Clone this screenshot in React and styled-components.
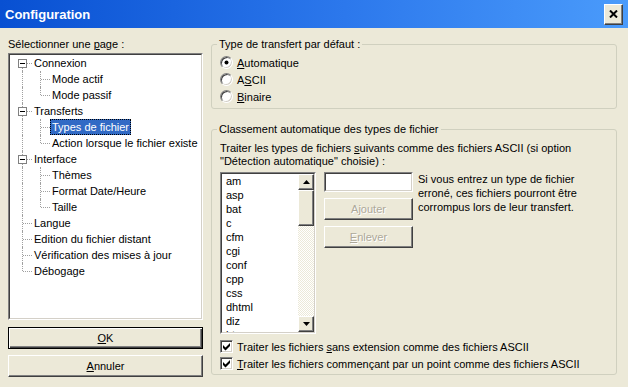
import React from 'react';
import styled, { createGlobalStyle, css } from 'styled-components';

const GlobalStyle = createGlobalStyle`
  html, body {
    margin: 0;
    padding: 0;
  }
  body {
    background: #ece9d8;
    font-family: "Liberation Sans", Arial, sans-serif;
    font-size: 11px;
    color: #000;
  }
  * {
    box-sizing: border-box;
  }
`;

const raised = css`
  background: #ece9d8;
  border: 1px solid;
  border-color: #fff #404040 #404040 #fff;
  box-shadow: inset -1px -1px #808080;
`;

const Window = styled.div`
  width: 628px;
  height: 387px;
  display: flex;
  flex-direction: column;
  overflow: hidden;
  background: #ece9d8;
`;

const TitleBar = styled.div`
  height: 28px;
  flex: none;
  display: flex;
  align-items: center;
  justify-content: space-between;
  padding: 0 5px 0 5px;
  background: linear-gradient(to right, #0850d2 0%, #2c78ec 55%, #4a9bfb 100%);
  color: #fff;
  font-size: 13px;
  font-weight: bold;
`;

const CloseButton = styled.div`
  ${raised};
  width: 19px;
  height: 21px;
  display: flex;
  align-items: center;
  justify-content: center;
`;

const Body = styled.div`
  flex: 1;
  display: flex;
  gap: 8px;
  padding: 10px 11px 0 8px;
`;

const LeftPane = styled.div`
  width: 195px;
  flex: none;
  display: flex;
  flex-direction: column;
`;

const RightPane = styled.div`
  flex: 1;
  display: flex;
  flex-direction: column;
`;

const Caption = styled.div`
  line-height: 13px;
  white-space: nowrap;
`;

const Sunken = styled.div`
  border: 1px solid;
  border-color: #808080 #fff #fff #808080;
  display: flex;
  flex: none;
`;

const SunkenInner = styled.div`
  flex: 1;
  min-width: 0;
  border: 1px solid;
  border-color: #404040 #d4d0c8 #d4d0c8 #404040;
  background: #fff;
  display: flex;
  overflow: hidden;
`;

const TreeFrame = styled(Sunken)`
  margin-top: 2px;
  height: 267px;
`;

const TreeList = styled.div`
  display: flex;
  flex-direction: column;
`;

const TreeRow = styled.div`
  display: flex;
  align-items: center;
  height: 16px;
  padding-left: 3px;
`;

const Guide = styled.span`
  position: relative;
  flex: none;
  width: 18px;
  height: 16px;

  &::before {
    content: '';
    display: ${p => (p.$kind === 'none' ? 'none' : 'block')};
    position: absolute;
    left: 9px;
    top: ${p => (p.$kind === 'first' ? '8px' : '0')};
    bottom: ${p => (p.$kind === 'ell' ? '8px' : '0')};
    border-left: 1px dotted #a0a0a0;
  }

  &::after {
    content: '';
    display: ${p => (p.$kind === 'pipe' || p.$kind === 'none' ? 'none' : 'block')};
    position: absolute;
    left: 10px;
    right: -1px;
    top: 8px;
    border-top: 1px dotted #a0a0a0;
  }
`;

const Expander = styled.span`
  position: absolute;
  left: 5px;
  top: 4px;
  width: 9px;
  height: 9px;
  border: 1px solid #808080;
  background: #fff;
  z-index: 1;

  &::after {
    content: '';
    position: absolute;
    left: 1px;
    top: 3px;
    width: 5px;
    height: 1px;
    background: #000;
  }
`;

const TreeLabel = styled.span`
  margin-left: 1px;
  padding: 0 2px;
  line-height: 16px;
  white-space: nowrap;
  ${p =>
    p.$selected &&
    css`
      background: #316ac5;
      color: #fff;
      outline: 1px dotted #000;
      outline-offset: -1px;
    `}
`;

const PushButton = styled.div`
  ${raised};
  height: 22px;
  display: flex;
  align-items: center;
  justify-content: center;
  color: ${p => (p.$disabled ? '#aca899' : '#000')};
  text-shadow: ${p => (p.$disabled ? '1px 1px #fff' : 'none')};
  ${p =>
    p.$default &&
    css`
      border-color: #000;
      box-shadow: inset 1px 1px #fff, inset -1px -1px #404040, inset -2px -2px #808080;
    `}
`;

const DialogButtons = styled.div`
  display: flex;
  flex-direction: column;
  gap: 6px;
  margin-top: 7px;
`;

const GroupBox = styled.fieldset`
  margin: ${p => p.$mt || 0}px 0 0;
  padding: 0 8px ${p => p.$pb || 0}px;
  border: 1px solid #d0d0bf;
  border-radius: 3px;
  min-width: 0;
  display: flex;
  flex-direction: column;
`;

const Legend = styled.legend`
  margin-left: -3px;
  padding: 0 2px;
  line-height: 13px;
`;

const RadioList = styled.div`
  margin-top: 3px;
  display: flex;
  flex-direction: column;
`;

const OptionRow = styled.label`
  display: flex;
  align-items: center;
  gap: 4px;
  height: 17px;
  white-space: nowrap;
`;

const RadioDot = styled.span`
  position: relative;
  width: 13px;
  height: 13px;
  flex: none;
  border-radius: 50%;
  border: 1px solid;
  border-color: #808080 #fff #fff #808080;
  background: #fff;
  box-shadow: inset 1px 1px #404040, inset -1px -1px #d4d0c8;

  &::after {
    content: '';
    display: ${p => (p.$checked ? 'block' : 'none')};
    position: absolute;
    left: 4px;
    top: 4px;
    width: 3px;
    height: 3px;
    border-radius: 50%;
    background: #000;
    box-shadow: 0 0 0 0.5px #000;
  }
`;

const CheckFrame = styled.span`
  width: 13px;
  height: 13px;
  flex: none;
  border: 1px solid;
  border-color: #808080 #fff #fff #808080;
  background: #fff;
  box-shadow: inset 1px 1px #404040, inset -1px -1px #d4d0c8;
  display: flex;
  align-items: center;
  justify-content: center;
`;

const Paragraph = styled.p`
  margin: 6px 0 0;
  line-height: 13px;
`;

const FileRow = styled.div`
  display: flex;
  align-items: flex-start;
  margin-top: 4px;
`;

const ListFrame = styled(Sunken)`
  width: 96px;
  height: 162px;
`;

const Items = styled.div`
  flex: 1;
  display: flex;
  flex-direction: column;
  overflow: hidden;
`;

const Item = styled.div`
  height: 14px;
  line-height: 14px;
  padding-left: 4px;
  flex: none;
`;

const ScrollBar = styled.div`
  width: 16px;
  flex: none;
  display: flex;
  flex-direction: column;
`;

const ScrollButton = styled.div`
  ${raised};
  height: 16px;
  flex: none;
  display: flex;
  align-items: center;
  justify-content: center;
`;

const Thumb = styled.div`
  ${raised};
  height: 36px;
  flex: none;
`;

const Track = styled.div`
  flex: 1;
  background: repeating-conic-gradient(#fff 0 25%, #ece9d8 0 50%) 0 0 / 2px 2px;
`;

const SideColumn = styled.div`
  width: 89px;
  margin-left: 8px;
  flex: none;
  display: flex;
  flex-direction: column;
  gap: 6px;
`;

const TextField = styled(Sunken)`
  height: 20px;
`;

const HelpText = styled.p`
  margin: 0 0 0 5px;
  line-height: 14px;
`;

const CheckList = styled.div`
  margin-top: 4px;
  display: flex;
  flex-direction: column;
`;

const tree = [
  { label: 'Connexion', guides: ['first'], box: true },
  { label: 'Mode actif', guides: ['pipe', 'tee'] },
  { label: 'Mode passif', guides: ['pipe', 'ell'] },
  { label: 'Transferts', guides: ['tee'], box: true },
  { label: 'Types de fichier', guides: ['pipe', 'tee'], selected: true },
  { label: 'Action lorsque le fichier existe', guides: ['pipe', 'ell'] },
  { label: 'Interface', guides: ['tee'], box: true },
  { label: 'Thèmes', guides: ['pipe', 'tee'] },
  { label: 'Format Date/Heure', guides: ['pipe', 'tee'] },
  { label: 'Taille', guides: ['pipe', 'ell'] },
  { label: 'Langue', guides: ['tee'] },
  { label: 'Edition du fichier distant', guides: ['tee'] },
  { label: 'Vérification des mises à jour', guides: ['tee'] },
  { label: 'Débogage', guides: ['ell'] },
];

const extensions = ['am', 'asp', 'bat', 'c', 'cfm', 'cgi', 'conf', 'cpp', 'css', 'dhtml', 'diz', 'htm', 'html'];

const Arrow = ({ down }) => (
  <svg width="7" height="4" viewBox="0 0 7 4">
    <polygon points={down ? '0,0 7,0 3.5,4' : '0,4 7,4 3.5,0'} fill="#000" />
  </svg>
);

const Check = () => (
  <svg width="9" height="9" viewBox="0 0 9 9">
    <polygon points="1,3 3.5,5.5 8,1 8,4 3.5,8.5 1,6" fill="#000" />
  </svg>
);

const App = () => {
  return (
    <Window>
      <GlobalStyle />
      <TitleBar>
        <span>Configuration</span>
        <CloseButton>
          <svg width="9" height="8" viewBox="0 0 9 8">
            <path d="M1 0.5 L8 7.5 M8 0.5 L1 7.5" stroke="#000" strokeWidth="2" />
          </svg>
        </CloseButton>
      </TitleBar>
      <Body>
        <LeftPane>
          <Caption>
            Sélectionner une <u>p</u>age :
          </Caption>
          <TreeFrame>
            <SunkenInner>
              <TreeList>
                {tree.map(node => (
                  <TreeRow key={node.label}>
                    {node.guides.map((kind, i) => (
                      <Guide key={i} $kind={kind}>
                        {node.box && i === node.guides.length - 1 && <Expander />}
                      </Guide>
                    ))}
                    <TreeLabel $selected={node.selected}>{node.label}</TreeLabel>
                  </TreeRow>
                ))}
              </TreeList>
            </SunkenInner>
          </TreeFrame>
          <DialogButtons>
            <PushButton $default>
              <span>
                <u>O</u>K
              </span>
            </PushButton>
            <PushButton>
              <span>
                <u>A</u>nnuler
              </span>
            </PushButton>
          </DialogButtons>
        </LeftPane>
        <RightPane>
          <GroupBox $pb={3}>
            <Legend>Type de transfert par défaut :</Legend>
            <RadioList>
              <OptionRow>
                <RadioDot $checked />
                <span>
                  <u>A</u>utomatique
                </span>
              </OptionRow>
              <OptionRow>
                <RadioDot />
                <span>
                  A<u>S</u>CII
                </span>
              </OptionRow>
              <OptionRow>
                <RadioDot />
                <span>
                  <u>B</u>inaire
                </span>
              </OptionRow>
            </RadioList>
          </GroupBox>
          <GroupBox $mt={14} $pb={2}>
            <Legend>Classement automatique des types de fichier</Legend>
            <Paragraph>
              Traiter les types de fichiers <u>s</u>uivants comme des fichiers ASCII (si option
              <br />
              "Détection automatique" choisie) :
            </Paragraph>
            <FileRow>
              <ListFrame>
                <SunkenInner>
                  <Items>
                    {extensions.map(ext => (
                      <Item key={ext}>{ext}</Item>
                    ))}
                  </Items>
                  <ScrollBar>
                    <ScrollButton>
                      <Arrow />
                    </ScrollButton>
                    <Thumb />
                    <Track />
                    <ScrollButton>
                      <Arrow down />
                    </ScrollButton>
                  </ScrollBar>
                </SunkenInner>
              </ListFrame>
              <SideColumn>
                <TextField>
                  <SunkenInner />
                </TextField>
                <PushButton $disabled>
                  <span>
                    A<u>j</u>outer
                  </span>
                </PushButton>
                <PushButton $disabled>
                  <span>
                    <u>E</u>nlever
                  </span>
                </PushButton>
              </SideColumn>
              <HelpText>
                Si vous entrez un type de fichier
                <br />
                erroné, ces fichiers pourront être
                <br />
                corrompus lors de leur transfert.
              </HelpText>
            </FileRow>
            <CheckList>
              <OptionRow>
                <CheckFrame>
                  <Check />
                </CheckFrame>
                <span>
                  Traiter les fichiers <u>s</u>ans extension comme des fichiers ASCII
                </span>
              </OptionRow>
              <OptionRow>
                <CheckFrame>
                  <Check />
                </CheckFrame>
                <span>
                  <u>T</u>raiter les fichiers commençant par un point comme des fichiers ASCII
                </span>
              </OptionRow>
            </CheckList>
          </GroupBox>
        </RightPane>
      </Body>
    </Window>
  );
};

export default App;
